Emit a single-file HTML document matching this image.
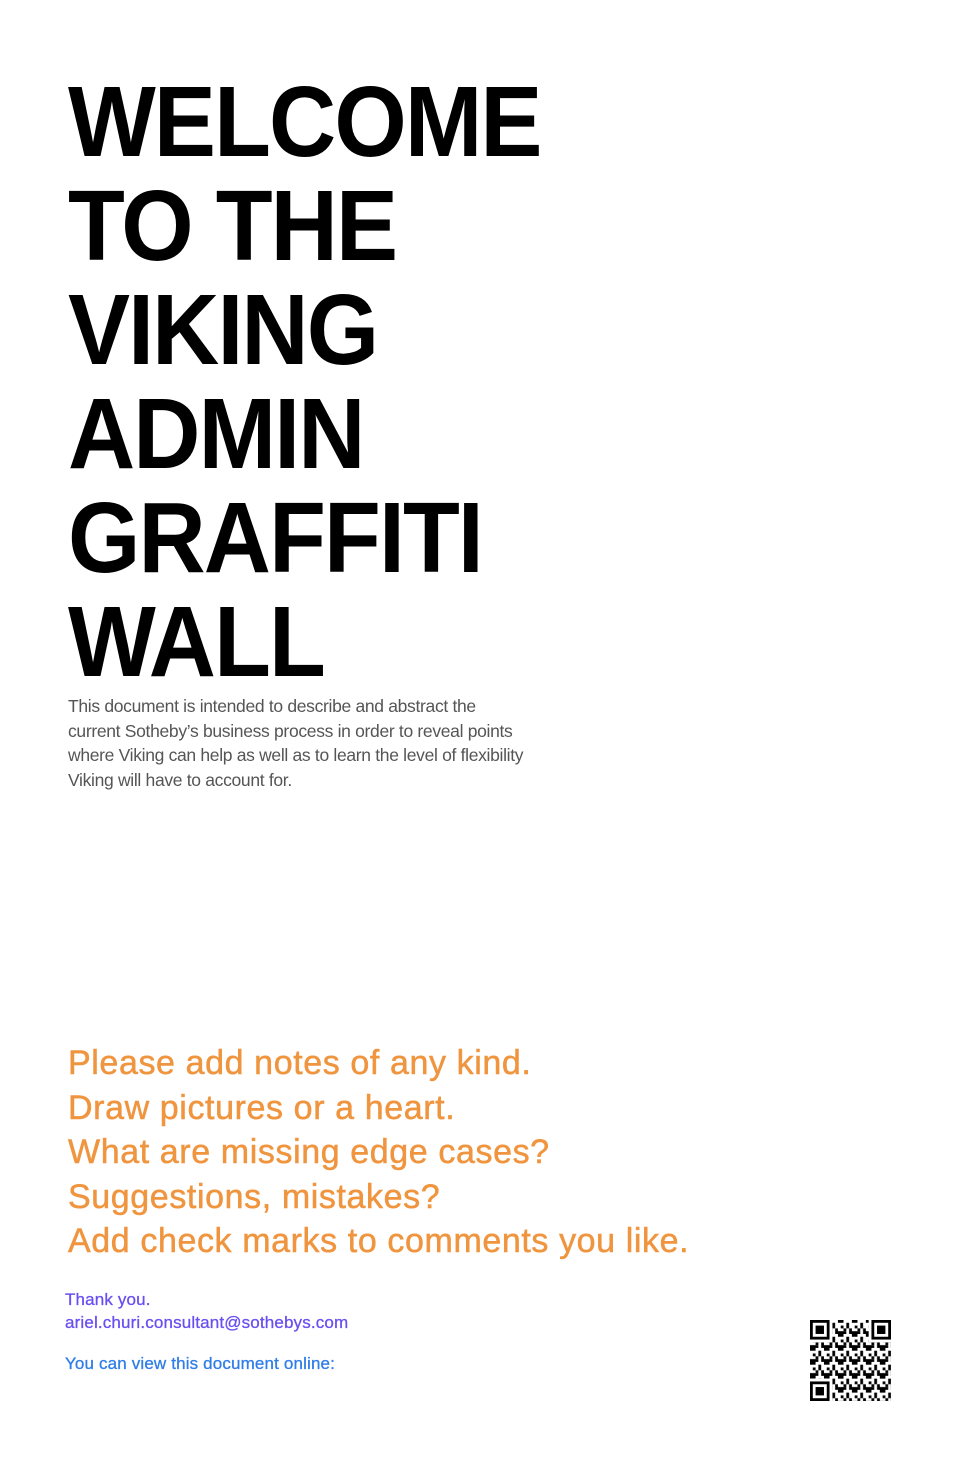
<!DOCTYPE html>
<html><head><meta charset="utf-8"><style>
html,body{margin:0;padding:0;background:#fff;width:953px;height:1458px;overflow:hidden}
body{position:relative;font-family:"Liberation Sans",sans-serif}
.t{position:absolute;left:68px;top:70px;font-weight:bold;font-size:100px;line-height:104px;letter-spacing:-2px;color:#000;white-space:nowrap;transform:scaleX(0.93);transform-origin:0 0}
.p{position:absolute;left:68px;top:694px;font-size:17.5px;line-height:24.7px;color:#555;letter-spacing:-0.32px;white-space:nowrap}
.o{position:absolute;left:68px;top:1041px;font-size:34px;line-height:44.6px;color:#f0953f;white-space:nowrap;letter-spacing:0.6px;-webkit-text-stroke:0.5px #f0953f}
.s{position:absolute;left:65px;font-size:17px;white-space:nowrap;letter-spacing:0.15px;-webkit-text-stroke:0.3px currentColor}
</style></head><body>
<div class="t">WELCOME<br>TO THE<br>VIKING<br>ADMIN<br>GRAFFITI<br>WALL</div>
<div class="p">This document is intended to describe and abstract the<br>current Sotheby’s business process in order to reveal points<br>where Viking can help as well as to learn the level of flexibility<br>Viking will have to account for.</div>
<div class="o">Please add notes of any kind.<br>Draw pictures or a heart.<br>What are missing edge cases?<br>Suggestions, mistakes?<br>Add check marks to comments you like.</div>
<div class="s" style="top:1290px;color:#6a4ff0">Thank you.</div>
<div class="s" style="top:1313px;color:#6a4ff0">ariel.churi.consultant@sothebys.com</div>
<div class="s" style="top:1354px;color:#2f7de8">You can view this document online:</div>
<svg style="position:absolute;left:810px;top:1320px" width="81" height="81" viewBox="0 0 29 29">
<defs><pattern id="q" width="5" height="5" patternUnits="userSpaceOnUse">
<rect x="0" y="0" width="2" height="1"/><rect x="3" y="1" width="1" height="2"/><rect x="1" y="2" width="1" height="1"/><rect x="0" y="4" width="3" height="1"/><rect x="4" y="3" width="1" height="2"/><rect x="2" y="3" width="1" height="1"/></pattern></defs>
<rect width="29" height="29" fill="url(#q)"/>
<g fill="#fff"><rect x="0" y="0" width="8" height="8"/><rect x="21" y="0" width="8" height="8"/><rect x="0" y="21" width="8" height="8"/></g>
<g fill="none" stroke="#000"><rect x="0.5" y="0.5" width="6" height="6"/><rect x="22.5" y="0.5" width="6" height="6"/><rect x="0.5" y="22.5" width="6" height="6"/></g>
<rect x="2" y="2" width="3" height="3"/><rect x="24" y="2" width="3" height="3"/><rect x="2" y="24" width="3" height="3"/>
</svg>
</body></html>
